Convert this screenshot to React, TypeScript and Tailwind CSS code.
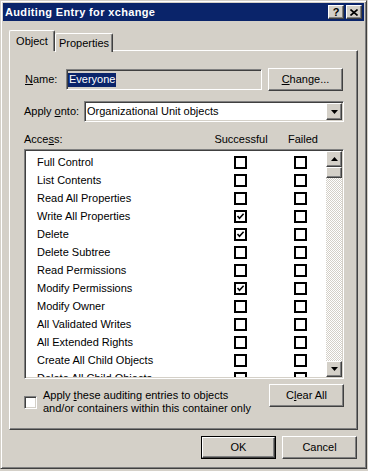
import type { ReactNode } from "react";

const raised =
    "border border-t-white border-l-white border-r-[#404040] border-b-[#404040] shadow-[inset_-1px_-1px_#808080]";
const sunken =
    "border border-t-[#808080] border-l-[#808080] border-r-white border-b-white shadow-[inset_1px_1px_#404040,inset_-1px_-1px_#d4d0c8]";

interface Permission {
    name: string;
    success: boolean;
    failed: boolean;
}

const permissions: Permission[] = [
    { name: "Full Control", success: false, failed: false },
    { name: "List Contents", success: false, failed: false },
    { name: "Read All Properties", success: false, failed: false },
    { name: "Write All Properties", success: true, failed: false },
    { name: "Delete", success: true, failed: false },
    { name: "Delete Subtree", success: false, failed: false },
    { name: "Read Permissions", success: false, failed: false },
    { name: "Modify Permissions", success: true, failed: false },
    { name: "Modify Owner", success: false, failed: false },
    { name: "All Validated Writes", success: false, failed: false },
    { name: "All Extended Rights", success: false, failed: false },
    { name: "Create All Child Objects", success: false, failed: false },
    { name: "Delete All Child Objects", success: false, failed: false },
];

function Button({ children, isDefault = false }: { children: ReactNode; isDefault?: boolean }) {
    if (isDefault) {
        return (
            <div className="w-[75px] h-[23px] border border-black">
                <div className={`h-full flex items-center justify-center ${raised}`}>{children}</div>
            </div>
        );
    }
    return <div className={`w-[75px] h-[23px] flex items-center justify-center ${raised}`}>{children}</div>;
}

function ListCheck({ checked }: { checked: boolean }) {
    return (
        <div className="w-[13px] h-[13px] border-2 border-black bg-white flex items-center justify-center">
            {checked && (
                <svg width="9" height="9" viewBox="0 0 9 9">
                    <path d="M1.5 4 L3.5 6.2 L7.6 1.8" fill="none" stroke="#000" strokeWidth="1.6" />
                </svg>
            )}
        </div>
    );
}

function Arrow({ down = false }: { down?: boolean }) {
    return (
        <svg width="7" height="4" viewBox="0 0 7 4">
            <polygon points={down ? "0,0 7,0 3.5,4" : "3.5,0 7,4 0,4"} fill="#000" />
        </svg>
    );
}

export default function App() {
    return (
        <div className="w-[368px] h-[471px] bg-[#d4d0c8] font-['Liberation_Sans',Arial,sans-serif] text-[11px] text-black leading-none">
            <div className="w-[367px] h-[469px] border border-t-[#d4d0c8] border-l-[#d4d0c8] border-r-[#404040] border-b-[#404040] shadow-[inset_1px_1px_#fff,inset_-1px_-1px_#808080] p-[2px] flex flex-col">
                {/* Title bar */}
                <div className="h-[18px] bg-[#0a246a] flex items-center pl-[2px] pr-[2px]">
                    <span className="text-white font-bold text-[11px] tracking-[0.35px]">Auditing Entry for xchange</span>
                    <div className="ml-auto flex items-center">
                        <div className={`w-[16px] h-[14px] bg-[#d4d0c8] flex items-center justify-center font-bold text-[11px] ${raised}`}>
                            ?
                        </div>
                        <div className={`ml-[2px] w-[16px] h-[14px] bg-[#d4d0c8] flex items-center justify-center ${raised}`}>
                            <svg width="8" height="7" viewBox="0 0 8 7">
                                <path d="M0.5 0.5 L7.5 6.5 M7.5 0.5 L0.5 6.5" stroke="#000" strokeWidth="1.6" />
                            </svg>
                        </div>
                    </div>
                </div>

                {/* Tabs */}
                <div className="px-[6px]">
                    <div className="h-[30px] flex items-end relative z-10">
                        <div className="w-[46px] h-[21px] border-t border-l border-white border-r border-r-[#404040] shadow-[inset_-1px_0_#808080] rounded-t-[2px] bg-[#d4d0c8] flex items-start justify-center pt-[5px]">
                            Object
                        </div>
                        <div className="w-[58px] h-[19px] border-t border-l border-white border-r border-r-[#404040] shadow-[inset_-1px_0_#808080] rounded-t-[2px] bg-[#d4d0c8] flex items-start justify-center pt-[4px] -mb-px relative -z-10">
                            Properties
                        </div>
                    </div>

                    {/* Panel */}
                    <div className="-mt-px h-[380px] border border-t-white border-l-white border-r-[#404040] border-b-[#404040] shadow-[inset_-1px_-1px_#808080] pl-[14px] pr-[13px] pt-[17px] flex flex-col">
                        {/* Name */}
                        <div className="h-[23px] flex items-center">
                            <span className="w-[42px] pl-[1px]">
                                <span className="underline">N</span>ame:
                            </span>
                            <div className={`w-[196px] h-[21px] bg-[#d4d0c8] flex items-center pl-[1px] ${sunken}`}>
                                <span className="bg-[#0a246a] text-white px-[1px] h-[14px] flex items-center">Everyone</span>
                            </div>
                            <div className="ml-[6px]">
                                <Button>
                                    <span>
                                        <span className="underline">C</span>hange...
                                    </span>
                                </Button>
                            </div>
                        </div>

                        {/* Apply onto */}
                        <div className="mt-[10px] h-[21px] flex items-center">
                            <span className="w-[60px]">
                                Apply <span className="underline">o</span>nto:
                            </span>
                            <div className={`flex-1 h-[21px] bg-white flex items-center ${sunken}`}>
                                <span className="pl-[2px] flex-1">Organizational Unit objects</span>
                                <div className={`w-[16px] h-[17px] mr-[1px] bg-[#d4d0c8] flex items-center justify-center ${raised}`}>
                                    <Arrow down />
                                </div>
                            </div>
                        </div>

                        {/* Access header */}
                        <div className="mt-[10px] h-[14px] flex items-center">
                            <span className="w-[190px]">
                                Acce<span className="underline">s</span>s:
                            </span>
                            <span className="w-[54px] text-center">Successful</span>
                            <span className="ml-[16px] w-[38px] text-center">Failed</span>
                        </div>

                        {/* Access list */}
                        <div className={`mt-[3px] h-[230px] bg-white flex ${sunken} p-[1px]`}>
                            <div className="flex-1 overflow-hidden pt-[2px]">
                                {permissions.map((p) => (
                                    <div key={p.name} className="h-[18px] flex items-center">
                                        <span className="w-[208px] pl-[11px] whitespace-nowrap">{p.name}</span>
                                        <ListCheck checked={p.success} />
                                        <div className="ml-[47px]">
                                            <ListCheck checked={p.failed} />
                                        </div>
                                    </div>
                                ))}
                            </div>
                            <div className="w-[16px] flex flex-col bg-[repeating-conic-gradient(#d4d0c8_0_25%,#ffffff_0_50%)] bg-[length:2px_2px]">
                                <div className={`h-[16px] bg-[#d4d0c8] flex items-center justify-center ${raised}`}>
                                    <Arrow />
                                </div>
                                <div className={`h-[11px] bg-[#d4d0c8] ${raised}`} />
                                <div className="flex-1" />
                                <div className={`h-[16px] bg-[#d4d0c8] flex items-center justify-center ${raised}`}>
                                    <Arrow down />
                                </div>
                            </div>
                        </div>

                        {/* Apply checkbox + Clear All */}
                        <div className="flex items-start">
                            <div className="mt-[10px] flex items-center flex-1">
                                <div className={`w-[13px] h-[13px] bg-white ${sunken}`} />
                                <span className="ml-[6px] leading-[13px]">
                                    Apply <span className="underline">t</span>hese auditing entries to objects
                                    <br />
                                    and/or containers within this container only
                                </span>
                            </div>
                            <div className="mt-[5px]">
                                <Button>
                                    <span>
                                        C<span className="underline">l</span>ear All
                                    </span>
                                </Button>
                            </div>
                        </div>
                    </div>

                    {/* Dialog buttons */}
                    <div className="mt-[6px] flex justify-end gap-[6px] pr-[1px]">
                        <Button isDefault>OK</Button>
                        <Button>Cancel</Button>
                    </div>
                </div>
            </div>
        </div>
    );
}
